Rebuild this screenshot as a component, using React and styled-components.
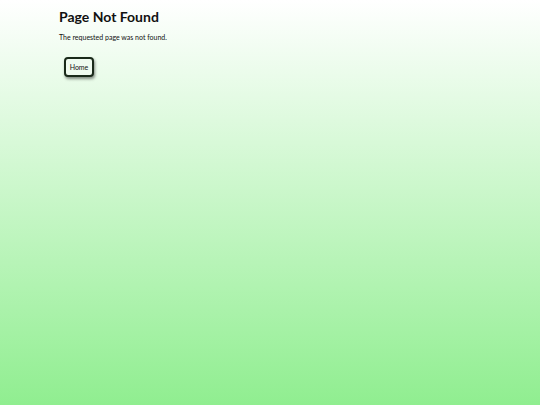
import React from 'react'
import styled, { createGlobalStyle } from 'styled-components'

const GlobalStyle = createGlobalStyle`
    html, body {
        margin: 0;
        padding: 0;
        height: 100%;
    }
    body {
        background: linear-gradient(to bottom, #ffffff 0%, #90ee90 100%);
        background-attachment: fixed;
        font-family: Lato, "Liberation Sans", sans-serif;
        color: #111;
    }
    #root {
        min-height: 100%;
    }
`

function App() {
    return (
        <>
            <GlobalStyle />
            <Page>
                <Title>Page Not Found</Title>
                <Message>The requested page was not found.</Message>
                <HomeButton>Home</HomeButton>
            </Page>
        </>
    )
}

export default App

const Page = styled.div`
    min-height: 405px;
    padding: 8px 59px;
    box-sizing: border-box;
`

const Title = styled.h1`
    font-size: 14px;
    font-weight: bold;
    margin: 0 0 6px 0;
    line-height: 18px;
`

const Message = styled.p`
    font-size: 7px;
    margin: 0 0 12px 0;
    line-height: 10px;
`

const HomeButton = styled.button`
    font-family: inherit;
    font-size: 7px;
    color: #111;
    background: #f0fbf0;
    border: 2px solid #1a2a1a;
    border-radius: 4px;
    height: 20px;
    width: 30px;
    padding: 0;
    margin-left: 5px;
    box-shadow: 1px 2px 3px rgba(0, 0, 0, 0.45);
    cursor: pointer;
`
